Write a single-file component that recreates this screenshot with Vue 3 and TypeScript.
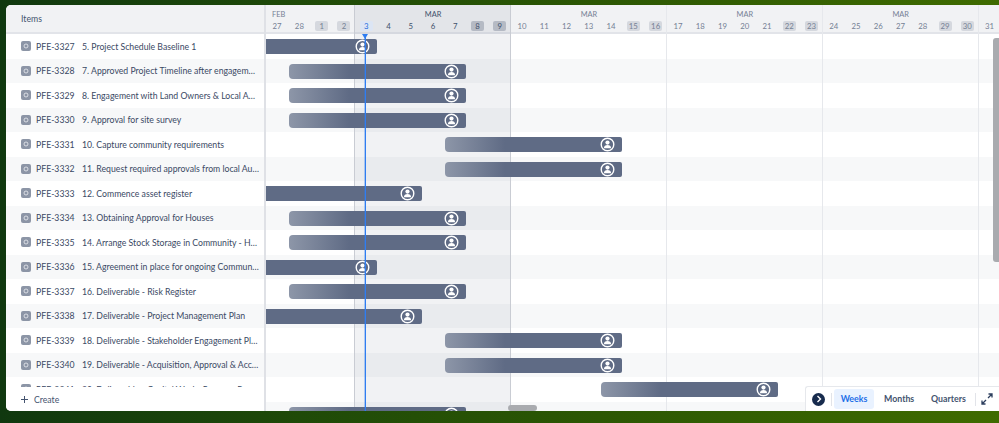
<script setup lang="ts">
interface Item { key: string; title: string; start: number; end: number }

const dayWidth = 22.27

const items: Item[] = [
  { key: 'PFE-3327', title: '5. Project Schedule Baseline 1', start: 0, end: 5 },
  { key: 'PFE-3328', title: '7. Approved Project Timeline after engagement with Land Owners', start: 1, end: 9 },
  { key: 'PFE-3329', title: '8. Engagement with Land Owners & Local Authorities', start: 1, end: 9 },
  { key: 'PFE-3330', title: '9. Approval for site survey', start: 1, end: 9 },
  { key: 'PFE-3331', title: '10. Capture community requirements', start: 8, end: 16 },
  { key: 'PFE-3332', title: '11. Request required approvals from local Authorities', start: 8, end: 16 },
  { key: 'PFE-3333', title: '12. Commence asset register', start: 0, end: 7 },
  { key: 'PFE-3334', title: '13. Obtaining Approval for Houses', start: 1, end: 9 },
  { key: 'PFE-3335', title: '14. Arrange Stock Storage in Community - Housing', start: 1, end: 9 },
  { key: 'PFE-3336', title: '15. Agreement in place for ongoing Community Support', start: 0, end: 5 },
  { key: 'PFE-3337', title: '16. Deliverable - Risk Register', start: 1, end: 9 },
  { key: 'PFE-3338', title: '17. Deliverable - Project Management Plan', start: 0, end: 7 },
  { key: 'PFE-3339', title: '18. Deliverable - Stakeholder Engagement Plan and Register', start: 8, end: 16 },
  { key: 'PFE-3340', title: '19. Deliverable - Acquisition, Approval & Access Plan', start: 8, end: 16 },
  { key: 'PFE-3341', title: '20. Deliverable - Capital Works Program Report', start: 15, end: 23 },
  { key: 'PFE-3342', title: '21. Deliverable - Communications Plan', start: 1, end: 9 }
]

const days = [27, 28, 1, 2, 3, 4, 5, 6, 7, 8, 9, 10, 11, 12, 13, 14, 15, 16, 17, 18, 19, 20, 21, 22, 23, 24, 25, 26, 27, 28, 29, 30, 31]
const weekendIdx = new Set([2, 3, 9, 10, 16, 17, 23, 24, 30, 31])
const months = [
  { label: 'FEB', days: 4, cls: 'first' },
  { label: 'MAR', days: 7, cls: 'current' },
  { label: 'MAR', days: 7, cls: '' },
  { label: 'MAR', days: 7, cls: '' },
  { label: 'MAR', days: 7, cls: '' },
  { label: '', days: 1, cls: '' }
]

function dayClass(i: number): string[] {
  const c: string[] = []
  if (weekendIdx.has(i)) c.push('weekend')
  if (i === 4) c.push('today')
  if (i >= 4 && i <= 10) c.push('in-week')
  return c
}
function barStyle(it: Item) {
  const inset = it.start ? 0.5 : 0
  return {
    left: `${it.start * dayWidth + inset}px`,
    width: `${(it.end - it.start) * dayWidth - inset}px`
  }
}
</script>

<template>
  <div class="page">
    <div class="card">
      <aside class="left">
        <div class="left-head">Items</div>
        <div class="list">
          <div v-for="it in items" :key="it.key" class="item">
            <span class="type"><i></i></span>
            <span class="key">{{ it.key }}</span>
            <span class="title">{{ it.title }}</span>
          </div>
        </div>
        <div class="create">
          <svg width="7" height="7" viewBox="0 0 7 7"><path d="M3.5 0v7M0 3.5h7" stroke="#44546f" stroke-width="1" fill="none" /></svg>
          <span>Create</span>
        </div>
      </aside>

      <section class="right">
        <header class="time-head">
          <div class="months">
            <span v-for="(m, i) in months" :key="i" class="month" :class="m.cls" :style="{ width: m.days * dayWidth + 'px' }">{{ m.label }}</span>
          </div>
          <div class="days">
            <span v-for="(d, i) in days" :key="i" class="day" :class="dayClass(i)"><b>{{ d }}</b></span>
          </div>
        </header>

        <div class="weeks">
          <span v-for="(m, i) in months" :key="i" class="week" :class="m.cls" :style="{ width: m.days * dayWidth + 'px' }"></span>
        </div>

        <div class="time-body">
          <div v-for="it in items" :key="it.key" class="row">
            <div class="bar" :class="{ clipped: it.start === 0 }" :style="barStyle(it)">
              <svg class="avatar" width="15" height="15" viewBox="0 0 15 15">
                <circle cx="7.5" cy="7.5" r="6.3" fill="none" stroke="#fff" stroke-width="1.4" />
                <circle cx="7.5" cy="5.6" r="2.1" fill="#fff" />
                <path d="M3.9 11.2c0-2 1.5-3.2 3.6-3.2s3.6 1.2 3.6 3.2z" fill="#fff" />
              </svg>
            </div>
          </div>
          <div class="today-line"></div>
          <div class="h-thumb"></div>
        </div>

        <div class="v-thumb"></div>

        <div class="toolbar">
          <span class="chev">
            <svg width="6" height="8" viewBox="0 0 6 8"><path d="M1.5 1l3 3-3 3" stroke="#fff" stroke-width="1.4" fill="none" /></svg>
          </span>
          <span class="sep"></span>
          <span class="tab weeks-tab">Weeks</span>
          <span class="tab months-tab">Months</span>
          <span class="tab quarters-tab">Quarters</span>
          <span class="sep last"></span>
          <svg class="expand" width="12" height="12" viewBox="0 0 12 12">
            <path d="M7 5l4-4M7.5 1H11v3.5M5 7l-4 4M1 7.5V11h3.5" stroke="#2c3e5d" stroke-width="1.3" fill="none" />
          </svg>
        </div>
      </section>
    </div>
  </div>
</template>

<style>
html, body { margin: 0; overflow: hidden; }
</style>

<style scoped>
.page {
  width: 999px;
  height: 423px;
  box-sizing: border-box;
  padding: 5px 0 12px 6px;
  background: linear-gradient(to right, #10380f 0%, #1f4a08 30%, #2c5703 60%, #3f6b00 100%);
  font-family: "Lato", "Open Sans", sans-serif;
  color: #44546f;
}
.card {
  display: flex;
  height: 100%;
  background: #fff;
  border-radius: 5px 0 0 5px;
  overflow: hidden;
}
.left {
  width: 258px;
  flex: none;
  display: flex;
  flex-direction: column;
  border-right: 2px solid #dfe1e6;
}
.left-head {
  height: 29px;
  flex: none;
  box-sizing: border-box;
  padding-left: 15px;
  display: flex;
  align-items: center;
  font-size: 8.7px;
  background: #f1f2f4;
  border-bottom: 2px solid #e2e4e9;
}
.list { flex: 1; min-height: 0; overflow: hidden; }
.item {
  height: 24.5px;
  display: flex;
  align-items: center;
  padding-left: 15px;
  font-size: 8.7px;
  color: #3a4964;
}
.item:nth-child(even) { background: #f7f8f9; }
.type {
  width: 10px;
  height: 10px;
  background: #8c95a6;
  border-radius: 2px;
  display: flex;
  align-items: center;
  justify-content: center;
  flex: none;
  margin-right: 5px;
}
.type i {
  width: 4px;
  height: 4px;
  border: 1px solid #eceef1;
  border-radius: 50%;
  display: block;
  transform: scale(0.8);
}
.key { width: 46px; flex: none; white-space: nowrap; }
.title {
  width: 177px;
  white-space: nowrap;
  overflow: hidden;
  text-overflow: ellipsis;
}
.create {
  height: 24px;
  flex: none;
  display: flex;
  align-items: center;
  gap: 6px;
  padding-left: 15px;
  font-size: 8.7px;
  background: #fff;
}
.right {
  position: relative;
  flex: 1;
  min-width: 0;
  display: flex;
  flex-direction: column;
}
.time-head {
  height: 29px;
  flex: none;
  box-sizing: border-box;
  background: #f1f2f4;
  border-bottom: 2px solid #e2e4e9;
}
.months { display: flex; height: 15px; }
.month {
  flex: none;
  font-size: 7.4px;
  line-height: 19px;
  text-align: center;
  color: #758195;
  box-sizing: border-box;
}
.month.first { text-align: left; padding-left: 6px; }
.month.current { color: #44546f; }
.days { display: flex; height: 11px; }
.day {
  flex: none;
  width: 22.27px;
  display: flex;
  justify-content: center;
  align-items: center;
  font-size: 7.8px;
  color: #758195;
}
.day.in-week { color: #44546f; }
.day b {
  font-weight: 400;
  min-width: 13px;
  height: 10px;
  line-height: 10px;
  text-align: center;
  border-radius: 2px;
}
.day.weekend b { background: #d5d8de; }
.day.in-week.weekend b { background: #c0c4cd; }
.day.today b { background: #e9f2ff; color: #1d6fe8; }
.weeks {
  position: absolute;
  inset: 0;
  display: flex;
  z-index: 1;
}
.week {
  flex: none;
  border-right: 1px solid #e6e8ec;
  box-sizing: border-box;
}
.week.first { border-right-color: #c9ccd3; }
.week.current { background: rgba(9, 30, 66, 0.06); border-right-color: #c9ccd3; }
.time-body {
  position: relative;
  flex: 1;
  min-height: 0;
  overflow: hidden;
}
.row { height: 24.5px; position: relative; }
.row:nth-child(even) { background: #f7f8f9; }
.bar {
  position: absolute;
  top: 5px;
  height: 15px;
  z-index: 2;
  border-radius: 4px 2px 2px 4px;
  background: linear-gradient(to right, #8d96a8 0, #5f6b85 60px);
  display: flex;
  align-items: center;
  justify-content: flex-end;
  padding-right: 7px;
  box-sizing: border-box;
}
.bar.clipped { border-radius: 0 2px 2px 0; background: #5f6b85; }
.today-line {
  position: absolute;
  top: 0;
  bottom: 0;
  left: 99px;
  width: 1px;
  background: #2f7df0;
  box-shadow: -1px 0 0 rgba(47, 125, 240, 0.35);
  z-index: 3;
}
.today-line::before {
  content: "";
  position: absolute;
  top: 0;
  left: -3px;
  border: 3px solid transparent;
  border-top: 5px solid #2f7df0;
  border-bottom: 0;
}
.h-thumb {
  position: absolute;
  left: 242px;
  bottom: 0;
  width: 29px;
  height: 6px;
  border-radius: 3px;
  background: #a9abaf;
  z-index: 3;
}
.v-thumb {
  position: absolute;
  right: 0;
  top: 33px;
  width: 6px;
  height: 224px;
  border-radius: 3px 0 0 3px;
  background: #a9abaf;
  z-index: 3;
}
.toolbar {
  position: absolute;
  right: 0;
  bottom: 0;
  width: 194px;
  height: 25px;
  box-sizing: border-box;
  background: #fff;
  border: 1px solid #e6e8ec;
  border-width: 1px 0 0 1px;
  border-top-left-radius: 3px;
  display: flex;
  align-items: center;
  padding-left: 6px;
  z-index: 4;
  font-size: 8.8px;
  font-weight: 700;
  color: #44546f;
}
.chev {
  width: 13px;
  height: 13px;
  border-radius: 50%;
  background: #172b4d;
  display: flex;
  align-items: center;
  justify-content: center;
  flex: none;
}
.sep {
  width: 1px;
  height: 13px;
  background: #e2e4e9;
  flex: none;
  margin: 0 2px 0 6px;
}
.sep.last { margin: 0 5px 0 0; }
.tab {
  height: 20px;
  line-height: 20px;
  border-radius: 3px;
  white-space: nowrap;
  flex: none;
}
.weeks-tab {
  width: 40px;
  text-align: center;
  margin-right: 10px;
  background: #e9f2ff;
  color: #1d6fe8;
}
.months-tab { width: 30px; margin-right: 17px; }
.quarters-tab { width: 34px; margin-right: 10px; }
.expand { flex: none; }
</style>
